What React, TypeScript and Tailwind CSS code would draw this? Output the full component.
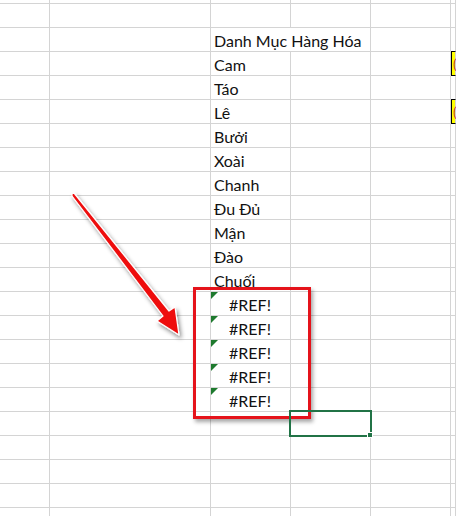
import React from "react";

const ROWS: (string | null)[] = [
  null,
  null,
  "Danh Mục Hàng Hóa",
  "Cam",
  "Táo",
  "Lê",
  "Bưởi",
  "Xoài",
  "Chanh",
  "Đu Đủ",
  "Mận",
  "Đào",
  "Chuối",
  "#REF!",
  "#REF!",
  "#REF!",
  "#REF!",
  "#REF!",
  null,
  null,
  null,
  null,
  null,
];

const cell = "border-r border-b border-[#d4d4d4] h-[24px] relative";

function Row({ text, idx }: { text: string | null; idx: number }) {
  const isErr = text === "#REF!";
  const wide = idx === 2;
  const yellow = idx === 3 || idx === 5;
  const selected = idx === 18;
  return (
    <>
      <div className={cell} />
      <div className={cell} />
      {wide ? (
        <div className={`${cell} col-span-2 flex items-end pl-[3px] pb-[1px] whitespace-nowrap`}>
          <span>{text}</span>
        </div>
      ) : (
        <div
          className={`${cell} flex items-end pb-[1px] whitespace-nowrap ${
            isErr ? "justify-center pr-[1px]" : "pl-[3px]"
          }`}
        >
          {isErr && (
            <svg className="absolute left-0 top-0" width="7" height="7" viewBox="0 0 7 7">
              <polygon points="0,0 7,0 0,7" fill="#1e7a2e" />
            </svg>
          )}
          {text && <span>{text}</span>}
        </div>
      )}
      {!wide && (
        <div className={`${cell} ${selected ? "z-10" : ""}`}>
          {selected && (
            <>
              <div className="absolute -left-[2px] -top-[2px] w-[83px] h-[27px] border-2 border-[#217346]" />
              <div className="absolute -right-[3px] -bottom-[3px] w-[6px] h-[6px] bg-[#217346] border border-white" />
            </>
          )}
        </div>
      )}
      <div className={cell} />
      <div
        className={`${cell} ${
          yellow ? "bg-[#ffff00] border-l border-t border-l-black border-t-black border-b-black mt-[-1px] h-[25px]" : ""
        }`}
      >
        {yellow && (
          <span className="absolute left-[1px] top-[5px] text-[#c0392b] text-[13px] leading-[14px]">(</span>
        )}
      </div>
    </>
  );
}

export default function App() {
  return (
    <div
      className="relative w-[456px] h-[516px] overflow-hidden bg-white text-[16px] leading-[19px] text-[#111]"
      style={{ fontFamily: "Lato, 'Noto Sans', sans-serif" }}
    >
      <div className="grid grid-cols-[50px_161px_80px_80px_80px_1fr] mt-[-20px]">
        {ROWS.map((t, i) => (
          <Row key={i} text={t} idx={i} />
        ))}
      </div>

      {/* red highlight box */}
      <div className="absolute left-[193px] top-[287px] w-[118px] h-[132px] border-[3px] border-[#e5131b] shadow-[2px_3px_4px_rgba(0,0,0,0.35)]" />

      {/* arrow */}
      <svg className="absolute left-0 top-0 pointer-events-none" width="456" height="516" viewBox="0 0 456 516">
        <defs>
          <filter id="sh" x="-20%" y="-20%" width="140%" height="140%">
            <feDropShadow dx="2" dy="3" stdDeviation="2.2" floodColor="#000" floodOpacity="0.45" />
          </filter>
        </defs>
        <polygon
          points="72,194 74,193 169,311 175,307 179,335 157,321 163,316 72,196"
          fill="#ee1111"
          stroke="#ffffff"
          strokeWidth="1.2"
          strokeLinejoin="round"
          filter="url(#sh)"
        />
      </svg>
    </div>
  );
}
